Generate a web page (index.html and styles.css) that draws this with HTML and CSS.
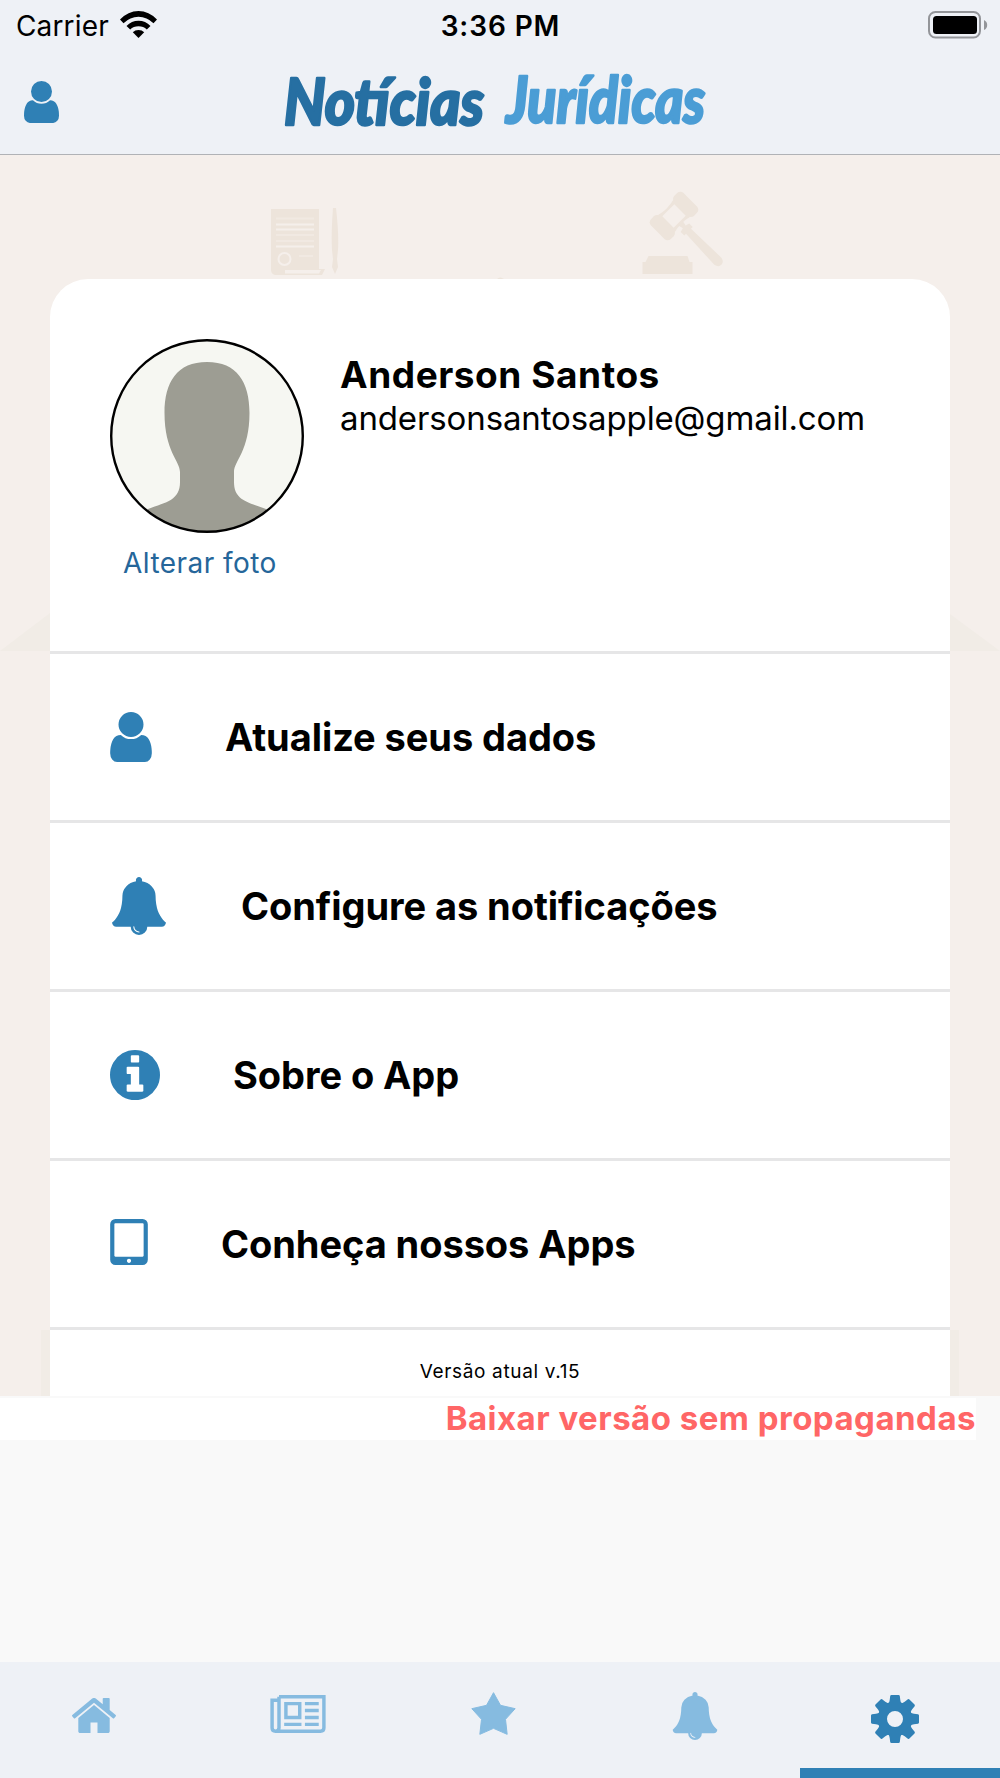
FILE: index.html
```html
<!DOCTYPE html>
<html lang="pt-BR">
<head>
    <meta charset="UTF-8">
    <meta name="viewport" content="width=device-width, initial-scale=1.0">
    <title>Notícias Jurídicas</title>
    <link rel="stylesheet" href="styles.css">
</head>
<body>
    <svg class="symbols">
        <symbol id="user" viewBox="256 128 1280 1536">
            <path d="M1536 1399q0 109-62.5 187t-150.5 78h-854q-88 0-150.5-78t-62.5-187q0-85 8.5-160.5t31.5-152 58.5-131 94-89 134.5-34.5q131 128 313 128t313-128q76 0 134.5 34.5t94 89 58.5 131 31.5 152 8.5 160.5zm-256-887q0 159-112.5 271.5t-271.5 112.5-271.5-112.5-112.5-271.5 112.5-271.5 271.5-112.5 271.5 112.5 112.5 271.5z"/>
        </symbol>
        <symbol id="bell" viewBox="0 0 1792 1792">
            <path d="M912 1696q0-16-16-16-59 0-101.5-42.5t-42.5-101.5q0-16-16-16t-16 16q0 73 51.5 124.5t124.5 51.5q16 0 16-16zm816-288q0 52-38 90t-90 38h-448q0 106-75 181t-181 75-181-75-75-181h-448q-52 0-90-38t-38-90q50-42 91-88t85-119.5 74.5-158.5 50-206 19.5-260q0-152 117-282.5t307-158.5q-8-19-8-39 0-40 28-68t68-28 68 28 28 68q0 20-8 39 190 28 307 158.5t117 282.5q0 139 19.5 260t50 206 74.5 158.5 85 119.5 91 88z"/>
        </symbol>
    </svg>

    <header class="header">
        <div class="status-bar">
            <div class="carrier">
                <span>Carrier</span>
                <svg class="wifi" viewBox="0 0 37 27">
                    <path d="M0 8.6Q8 0 18.500 0T37 8.600L33.500 12.300Q27 5.700 18.500 5.700T3.500 12.300z"/>
                    <path d="M6.500 15Q11.500 9.700 18.500 9.700T30.500 15L26.800 18.500Q23.500 15.300 18.500 15.300T10.200 18.500z"/>
                    <path d="M12.800 21.200Q15 18.900 18.500 18.900T24.200 21.200L18.500 27z"/>
                </svg>
            </div>
            <span class="time">3:36 PM</span>
            <svg class="battery" viewBox="0 0 60 28">
                <rect x="1" y="1" width="51" height="25.500" rx="6.500" fill="none" stroke="#939599" stroke-width="2"/>
                <rect x="5" y="5" width="44" height="18" rx="3.500"/>
                <path d="M56 9q3.200 1.500 3.200 5T56 19z" fill="#939599"/>
            </svg>
        </div>
        <div class="nav-bar">
            <svg class="nav-user"><use href="#user"/></svg>
            <svg class="logo" viewBox="0 0 440 96">
                <text class="logo-dark" x="4" y="71" textLength="200" lengthAdjust="spacingAndGlyphs">Notícias</text>
                <text class="logo-light" x="226" y="69" textLength="199" lengthAdjust="spacingAndGlyphs">Jurídicas</text>
            </svg>
        </div>
    </header>

    <main class="content">
        <svg class="backdrop" viewBox="0 155 1000 1241">
            <g fill="#ede4db">
                <!-- document -->
                <path d="M271 209h48v60h6l-3 6h-47q-4-1-4-5z"/>
                <path d="M276 224.500h38M276 229.500h38M276 246.500h38" stroke="#f5efeb" stroke-width="2"/>
                <path d="M276 218.500h38M276 235h38M276 241h38M299 256h14" stroke="#f1e9e2" stroke-width="2"/>
                <circle cx="284.500" cy="259" r="6" stroke="#f5efeb" stroke-width="2"/>
                <path d="M285 270h36l-2 3.500h-34z" fill="#f5efeb"/>
                <!-- pen -->
                <path d="M333 208h3q3 26 2 42l-1 9 1 8-3 7-3-7 1-8-1-9q-1-16 1-42z"/>
                <!-- gavel -->
                <path d="M642.500 274v-12h3l3-6h39l2 6h3v12z"/>
                <g transform="translate(674 216) rotate(45)">
                    <rect x="-14" y="-23" width="28" height="13" rx="4.500"/>
                    <rect x="-14" y="10" width="28" height="13" rx="4.500"/>
                    <path d="M-12-11Q-9 0-12 11H12Q9 0 12-11z"/>
                    <path d="M-8-8.500h16v17h-16z" fill="#f5efeb"/>
                    <path d="M10-2.500l5 1 1-4h5v2.500l42-1q5 1 5 5t-5 5l-42-2v2.500h-5l-1-4-5 1z"/>
                </g>
                <path d="M497 279q3-3 7 0z"/>
            </g>
            <g fill="#f1ece6">
                <path d="M0 651L50 613v38zM1000 651l-50-37v37zM41 1330h9v66h-9zM950 1330h9v66h-9z"/>
            </g>
        </svg>

        <section class="card">
            <div class="profile">
                <div class="photo">
                    <svg class="avatar" viewBox="0 0 194 194">
                        <clipPath id="round"><circle cx="97" cy="97" r="96"/></clipPath>
                        <circle cx="97" cy="97" r="96" fill="#f6f7f2"/>
                        <path clip-path="url(#round)" fill="#9d9d93" d="M97 23C127 23 139.500 43 139.500 74C139.500 112 124 122 124 133V143C124 161 137 163 156 170V194H38V170C57 163 70 161 70 143V133C70 122 54.500 112 54.500 74C54.500 43 67 23 97 23z"/>
                        <circle cx="97" cy="97" r="95.800" fill="none" stroke="#000" stroke-width="2.400"/>
                    </svg>
                    <a class="change-photo">Alterar foto</a>
                </div>
                <div class="identity">
                    <h1>Anderson Santos</h1>
                    <p>andersonsantosapple@gmail.com</p>
                </div>
            </div>

            <ul class="menu">
                <li>
                    <svg class="icon-user"><use href="#user"/></svg>
                    <span>Atualize seus dados</span>
                </li>
                <li>
                    <svg class="icon-bell"><use href="#bell"/></svg>
                    <span>Configure as notificações</span>
                </li>
                <li>
                    <svg class="icon-info" viewBox="128 128 1536 1536">
                        <path d="M1152 1376v-160q0-14-9-23t-23-9h-96v-512q0-14-9-23t-23-9h-320q-14 0-23 9t-9 23v160q0 14 9 23t23 9h96v320h-96q-14 0-23 9t-9 23v160q0 14 9 23t23 9h448q14 0 23-9t9-23zm-128-896v-160q0-14-9-23t-23-9h-192q-14 0-23 9t-9 23v160q0 14 9 23t23 9h192q14 0 23-9t9-23zm640 416q0 209-103 385.5t-279.500 279.500-385.500 103-385.500-103-279.500-279.500-103-385.500 103-385.500 279.500-279.500 385.500-103 385.500 103 279.500 279.500 103 385.500z"/>
                    </svg>
                    <span>Sobre o App</span>
                </li>
                <li>
                    <svg class="icon-tablet" viewBox="320 128 1152 1408">
                        <path d="M960 1408q0-26-19-45t-45-19-45 19-19 45 19 45 45 19 45-19 19-45zm384-160v-960q0-13-9.500-22.500t-22.500-9.500h-832q-13 0-22.500 9.500t-9.500 22.500v960q0 13 9.500 22.500t22.500 9.500h832q13 0 22.500-9.500t9.500-22.500zm128-960v1088q0 66-47 113t-113 47h-832q-66 0-113-47t-47-113v-1088q0-66 47-113t113-47h832q66 0 113 47t47 113z"/>
                    </svg>
                    <span>Conheça nossos Apps</span>
                </li>
            </ul>
            <p class="version">Versão atual v.15</p>
        </section>
    </main>

    <a class="no-ads">Baixar versão sem propagandas</a>
    <div class="ad-space"></div>

    <nav class="tabs">
        <a class="tab">
            <svg class="tab-home" viewBox="89 256 1614 1280">
                <path d="M1472 992v480q0 26-19 45t-45 19h-384v-384h-256v384h-384q-26 0-45-19t-19-45v-480q0-1 .5-3t.5-3l575-474 575 474q1 2 1 6zm223-69l-62 74q-8 9-21 11h-3q-13 0-21-7l-692-577-692 577q-12 8-24 7-13-2-21-11l-62-74q-8-10-7-23.500t11-21.500l719-599q32-26 76-26t76 26l244 204v-195q0-14 9-23t23-9h192q14 0 23 9t9 23v408l219 182q10 8 11 21.500t-7 23.500z"/>
            </svg>
        </a>
        <a class="tab">
            <svg class="tab-news" viewBox="0 0 16 11">
                <path class="line" d="M2.500.5h13V9.500q0 1-1 1H1.500q-1 0-1-1V1.500H2.500M2.500.5V9.500q0 1-1 1"/>
                <path class="line" d="M4.500 2.500h4v4h-4z"/>
                <path d="M4 8h5v1H4zM10 2h4v1h-4zM10 4h4v1h-4zM10 6h4v1h-4zM10 8h4v1h-4z"/>
            </svg>
        </a>
        <a class="tab">
            <svg class="tab-star" viewBox="0 0 134 129">
                <path stroke-width="3" stroke-linejoin="round" d="M67 2L88 40 132 50 103 82 108 127 67 109 26 127 31 82 2 50 46 40z"/>
            </svg>
        </a>
        <a class="tab">
            <svg class="tab-bell"><use href="#bell"/></svg>
        </a>
        <a class="tab active">
            <svg class="tab-gear" viewBox="-24 -24 48 48">
                <defs><path id="tooth" d="M-6.500-15Q-5.600-17-5.300-19L-4.800-23Q-4.600-24-3.600-24H3.600Q4.600-24 4.800-23L5.300-19Q5.600-17 6.500-15z"/></defs>
                <circle r="12.700" fill="none" stroke="#2f80b5" stroke-width="9.400"/>
                <use href="#tooth"/>
                <use href="#tooth" transform="rotate(45)"/>
                <use href="#tooth" transform="rotate(90)"/>
                <use href="#tooth" transform="rotate(135)"/>
                <use href="#tooth" transform="rotate(180)"/>
                <use href="#tooth" transform="rotate(225)"/>
                <use href="#tooth" transform="rotate(270)"/>
                <use href="#tooth" transform="rotate(315)"/>
            </svg>
        </a>
    </nav>
</body>
</html>
```

FILE: styles.css
```css
:root {
    --primary-color: #2f80b5;
    --primary-light: #86bbe0;
    --bar-bg: #eef1f6;
    --page-bg: #f5efeb;
    --line-color: #e6e6e7;
}
* {
    box-sizing: border-box;
}
body {
    margin: 0;
    width: 1000px;
    height: 1778px;
    display: flex;
    flex-direction: column;
    overflow: hidden;
    background: #f9f9f9;
    color: #000;
    font-family: Inter, 'Liberation Sans', sans-serif;
}
h1, p, ul {
    margin: 0;
    padding: 0;
}
svg {
    display: block;
    flex-shrink: 0;
}
.symbols {
    display: none;
}

/* top */
.header {
    height: 155px;
    background: var(--bar-bg);
    border-bottom: 1px solid #b0b2b6;
}
.status-bar {
    height: 51px;
    padding: 0 12px 0 16px;
    display: grid;
    grid-template-columns: 1fr auto 1fr;
    align-items: center;
    font-size: 28px;
}
.carrier {
    display: flex;
    align-items: center;
    gap: 11px;
    letter-spacing: 0.15px;
}
.wifi {
    width: 37px;
    height: 27px;
    margin-bottom: 3px;
}
.time {
    margin-right: 3px;
    font-weight: 600;
    letter-spacing: 0.9px;
}
.battery {
    width: 60px;
    height: 28px;
    margin-bottom: 2px;
    justify-self: end;
}
.nav-bar {
    height: 101px;
    padding-left: 24px;
    display: flex;
    align-items: center;
}
.nav-user {
    width: 35px;
    height: 42px;
    fill: var(--primary-color);
}
.logo {
    width: 440px;
    height: 96px;
    margin-left: 221px;
    font-family: Lato, sans-serif;
    font-size: 64px;
    font-style: italic;
    font-weight: 900;
    stroke-width: 2.5px;
    stroke-linejoin: round;
}
.logo-dark {
    fill: #266fa2;
    stroke: #266fa2;
}
.logo-light {
    fill: #4b9dd5;
    stroke: #4b9dd5;
}

/* content */
.content {
    position: relative;
    height: 1241px;
    padding: 124px 50px 0;
    background: var(--page-bg);
}
.backdrop {
    position: absolute;
    top: 0;
    left: 0;
    width: 1000px;
    height: 1241px;
}
.card {
    position: relative;
    height: 1117px;
    background: #fff;
    border-radius: 38px 38px 0 0;
}
.profile {
    height: 375px;
    padding: 60px 60px 0;
    display: flex;
    gap: 36px;
    border-bottom: 3px solid var(--line-color);
}
.photo {
    width: 194px;
}
.avatar {
    width: 194px;
    height: 194px;
}
.change-photo {
    display: block;
    margin-top: 12px;
    padding-left: 13px;
    color: #25669a;
    font-size: 28px;
    line-height: 36px;
    letter-spacing: 0.45px;
    white-space: nowrap;
}
.identity {
    padding-top: 14px;
}
.identity h1 {
    font-size: 37px;
    line-height: 43px;
    font-weight: 700;
    letter-spacing: 0.55px;
}
.identity p {
    font-size: 33px;
    line-height: 44px;
    letter-spacing: -0.12px;
}
.menu {
    list-style: none;
}
.menu li {
    height: 169px;
    padding-left: 60px;
    display: flex;
    align-items: center;
    gap: 73px;
    border-bottom: 3px solid var(--line-color);
    font-size: 38px;
    font-weight: 700;
    letter-spacing: -0.07px;
    white-space: nowrap;
}
.menu svg {
    fill: var(--primary-color);
}
.icon-user {
    width: 42px;
    height: 50px;
}
.icon-bell {
    width: 58px;
    height: 58px;
}
.icon-info {
    width: 50px;
    height: 50px;
}
.icon-tablet {
    width: 38px;
    height: 46px;
    margin-bottom: 4px;
}
.version {
    padding-top: 28px;
    text-align: center;
    font-size: 19px;
    line-height: 28px;
    letter-spacing: 0.65px;
}

.no-ads {
    margin-top: 2px;
    width: 976px;
    height: 42px;
    background: #fff;
    color: #ff6666;
    font-size: 33px;
    line-height: 41px;
    font-weight: 700;
    letter-spacing: 0.48px;
    text-align: right;
    white-space: nowrap;
}
.ad-space {
    height: 222px;
}

/* tabs */
.tabs {
    height: 116px;
    display: flex;
    background: var(--bar-bg);
}
.tab {
    width: 200px;
    display: flex;
    justify-content: center;
    align-items: flex-start;
    fill: var(--primary-light);
    stroke: none;
}
.tab.active {
    fill: var(--primary-color);
    border-bottom: 10px solid var(--primary-color);
}
.tab-home {
    width: 44px;
    height: 35px;
    margin: 36px 13px 0 0;
}
.tab-news {
    width: 56px;
    height: 38px;
    margin: 33px 4px 0 0;
}
.tab-news .line {
    fill: none;
    stroke: var(--primary-light);
    stroke-width: 1;
}
.tab-star {
    width: 45px;
    height: 43px;
    margin: 30px 13px 0 0;
    stroke: var(--primary-light);
}
.tab-bell {
    width: 48px;
    height: 48px;
    margin: 30px 10px 0 0;
}
.tab-gear {
    width: 48px;
    height: 48px;
    margin: 33px 10px 0 0;
}
```
